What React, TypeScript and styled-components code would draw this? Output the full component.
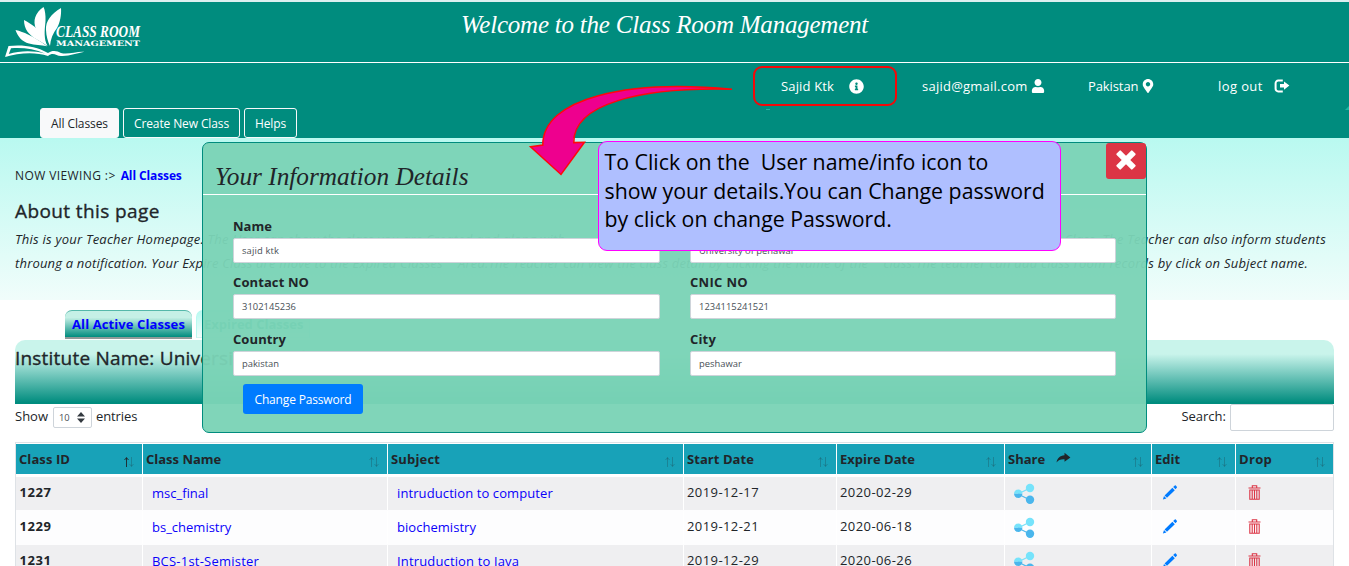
import React from "react";
import styled, { createGlobalStyle } from "styled-components";
import { FaInfoCircle, FaUser, FaMapMarkerAlt } from "react-icons/fa";

const teal = "#008c7e";
const script = "'Liberation Serif', serif";

const GlobalStyle = createGlobalStyle`
  * { box-sizing: border-box; }
  body {
    margin: 0;
    background: #fff;
    color: #212529;
    font-family: "Open Sans", "Noto Sans", sans-serif;
    font-size: 13px;
    overflow: hidden;
  }
`;

const Page = styled.div`
  position: relative;
  width: 1349px;
  height: 566px;
  overflow: hidden;
`;

const Txt = styled.span<{ $ls?: number }>`
  letter-spacing: ${(p) => p.$ls ?? 0}px;
  white-space: pre;
`;

/* Header */
const Header = styled.header`
  height: 138px;
  background: ${teal};
  color: #fff;
  border-top: 2px solid #dceff0;
`;
const Brand = styled.div`
  display: flex;
  height: 61px;
  border-bottom: 1px solid #fff;
`;
const LogoBox = styled.svg`
  display: block;
  width: 150px;
  height: 60px;
  flex: none;
`;
const Welcome = styled.h1`
  margin: 3px 0 0 311px;
  font: italic 400 25px/40px ${script};
`;
const UserBar = styled.div`
  display: grid;
  grid-template-columns: 141px 166px 130px 131px;
  height: 45px;
  padding: 13px 0 0 781px;
`;
const UserItem = styled.div<{ $gap: number }>`
  display: flex;
  align-items: center;
  gap: ${(p) => p.$gap}px;
  height: 20px;
  line-height: 20px;
`;
const NavTabs = styled.nav`
  display: flex;
  gap: 4px;
  padding-left: 40px;
`;
const NavTab = styled.button<{ $active?: boolean; $w: number }>`
  width: ${(p) => p.$w}px;
  height: 30px;
  padding: 1px 0 0;
  border: 1px solid #f8f9fa;
  border-radius: 3px;
  background: ${(p) => (p.$active ? "#f8f9fa" : "transparent")};
  color: ${(p) => (p.$active ? "#212529" : "#fff")};
  font: 12px/27px "Open Sans", sans-serif;
`;

/* Intro */
const Intro = styled.section`
  height: 162px;
  padding: 29px 0 0 15px;
  background: linear-gradient(#b9f9f0, #f1fdfb);
`;
const Viewing = styled.div`
  display: flex;
  gap: 5px;
  font-size: 12px;
  line-height: 18px;
`;
const BlueStrong = styled.strong`
  color: #0000ff;
`;
const Heading = styled.h2<{ $top: number; $bottom: number }>`
  margin: 0;
  padding: ${(p) => p.$top}px 0 ${(p) => p.$bottom}px;
  font-size: 19px;
  font-weight: 500;
  line-height: 24px;
  -webkit-text-stroke: 0.35px #212529;
`;
const IntroLine = styled.p<{ $w: number }>`
  display: flex;
  justify-content: space-between;
  width: ${(p) => p.$w}px;
  margin: 0;
  font-style: italic;
  line-height: 24px;
`;

/* Class lists */
const ListTabs = styled.div`
  display: flex;
  gap: 4px;
  height: 40px;
  padding: 10px 0 0 65px;
`;
const ListTab = styled.div<{ $active?: boolean; $w: number }>`
  width: ${(p) => p.$w}px;
  height: ${(p) => (p.$active ? 29 : 28)}px;
  padding-left: 7px;
  border-radius: 7px 7px 0 0;
  border: 1px solid ${(p) => (p.$active ? "#55b8aa" : "#b9f9f0")};
  border-width: ${(p) => (p.$active ? "1px 0 2px" : "1px")};
  border-bottom-color: ${(p) => (p.$active ? "#8f9a98" : "#d5f5f0")};
  background: ${(p) =>
    p.$active
      ? `linear-gradient(#c5f0e6 25%, ${teal})`
      : "linear-gradient(#b9f9f0, #f1fdfb)"};
  font-weight: 700;
  line-height: 26px;
  color: ${(p) => (p.$active ? "#0000ff" : "#008c7e")};
`;
const Institute = styled.div`
  height: 64px;
  margin: 0 15px;
  border-radius: 10px 10px 0 0;
  background: linear-gradient(#c9f4eb 22%, ${teal} 98%);
`;
const Controls = styled.div`
  display: flex;
  height: 38px;
  padding: 0 15px;
  line-height: 24px;
`;
const Select = styled.div`
  display: flex;
  align-items: center;
  gap: 7px;
  width: 39px;
  height: 21px;
  margin: 3px 4px 0 5px;
  padding-left: 5px;
  border: 1px solid #ced4da;
  border-radius: 2px;
  color: #495057;
  font-size: 9.4px;
`;
const Spacer = styled.div`
  flex: 1;
`;
const SearchInput = styled.input`
  width: 104px;
  height: 27px;
  margin-left: 4px;
  border: 1px solid #ced4da;
  border-radius: 2px;
`;

/* Table */
const Table = styled.div`
  margin: 0 15px;
  border: 1px solid #dee2e6;
  border-bottom: 0;
  padding-top: 1px;
`;
const Row = styled.div<{ $head?: boolean; $odd?: boolean }>`
  display: grid;
  grid-template-columns: 127px 245px 296px 153px 168px 147px 84px 97px;
  height: ${(p) => (p.$head ? 30 : 34)}px;
  margin-bottom: ${(p) => (p.$head ? 3 : 0)}px;
  line-height: 30px;
  background: ${(p) => (p.$head ? "#18a2b8" : p.$odd ? "#efeff1" : "#fdfdfe")};
  border-bottom: ${(p) => (p.$head ? 0 : 1)}px solid #fdfdfe;
  font-weight: ${(p) => (p.$head ? 700 : 400)};
`;
const Cell = styled.div<{ $pad?: number; $bold?: boolean }>`
  display: flex;
  align-items: flex-start;
  padding-left: ${(p) => p.$pad ?? 3}px;
  border-right: 1px solid #fff;
  font-weight: ${(p) => (p.$bold ? 700 : "inherit")};
  &:last-child { border-right: 0; }
`;
const ClassLink = styled.a`
  padding-top: 1px;
  color: #0a00fa;
`;
const SortMark = styled.svg`
  display: block;
  width: 12px;
  height: 12px;
  margin: 12px 7px 0 auto;
`;
const HeadIcon = styled.svg`
  display: block;
  margin: 8px 0 0 11px;
`;
const RowIcon = styled.svg`
  display: block;
  margin-top: 6px;
`;

/* Details dialog */
const Dialog = styled.section`
  position: absolute;
  left: 202px;
  top: 142px;
  width: 945px;
  height: 291px;
  border: 1px solid ${teal};
  border-radius: 7px;
  background: rgba(123, 211, 182, 0.96);
`;
const DialogHead = styled.div`
  display: flex;
  justify-content: space-between;
  height: 52px;
  border-bottom: 1px solid #fff;
`;
const DialogTitle = styled.h3`
  margin: 13px 0 0 12px;
  font: italic 400 25.3px/40px ${script};
`;
const CloseButton = styled.button`
  display: flex;
  align-items: center;
  justify-content: center;
  width: 40px;
  height: 36px;
  padding: 0 0 2px;
  border: 0;
  border-radius: 3px;
  background: #dc3545;
`;
const Fields = styled.div`
  display: grid;
  grid-template-columns: 427px 426px;
  grid-auto-rows: 56.4px;
  column-gap: 30px;
  padding: 22px 0 0 30px;
`;
const Label = styled.label`
  display: block;
  height: 21px;
  font-weight: 700;
  line-height: 18.4px;
`;
const FieldBox = styled.div`
  height: 25px;
  padding-left: 8px;
  border: 1px solid #ced4da;
  border-radius: 2px;
  background: #fff;
  color: #495057;
  font-size: 9.4px;
  line-height: 24px;
`;
const ChangeButton = styled.button`
  display: block;
  width: 120px;
  height: 30px;
  margin: -2px 0 0 40px;
  padding: 1px 0 0;
  border: 0;
  border-radius: 3px;
  background: #007bff;
  color: #fff;
  font: 12px/29px "Open Sans", sans-serif;
`;

/* Tutorial annotations */
const Highlight = styled.div`
  position: absolute;
  left: 753px;
  top: 66px;
  width: 144px;
  height: 40px;
  border: 2px solid #f50808;
  border-radius: 9px;
`;
const ArrowLayer = styled.svg`
  position: absolute;
  left: 0;
  top: 0;
  pointer-events: none;
`;
const Callout = styled.div`
  position: absolute;
  left: 598px;
  top: 141px;
  width: 463px;
  height: 110px;
  padding: 6px 0 0 5.5px;
  border: 1px solid #ff00ff;
  border-radius: 9px;
  background: #afbfff;
  color: #000;
  font-size: 21.3px;
  line-height: 28.5px;
  white-space: pre;
`;

const Logo = () => (
  <LogoBox viewBox="0 2 150 60" fill="#fff">
    <path d="M43.5 7 C35 13 32.5 21 36 29 C38 35 42 40 46.5 45 C43.5 35 45 28 45.5 21 C45.8 15 45 10 43.5 7Z" />
    <path d="M61 8 C51 14 45.5 21 46 30 C46.2 36 48 42 50 46 C50.5 39 53 33 57 28 C60 23 61.5 15 61 8Z" />
    <path d="M24 20 C24 29 29 35 36 39 C40 41.5 44 43.5 47.5 46 C44 38 40 32 35 27 C31 24 28 22 24 20Z" />
    <path d="M15.5 30 C18 37 22 41.5 29 43.5 C35 45 41 45 47 46.2 C40 41 34 37.5 28 34.5 C24 32.5 20 31 15.5 30Z" />
    <path
      d="M5 57 L8.5 46 C22 44.5 36 46 48 53 C52 50 57 50.5 61 53 C68 55 77 51 84.5 51.8 C77 53 69 56.5 61 56 C56 55.5 53 51.5 48 56 C35 51.5 18 53 5 57Z M8.8 54 C20 50.5 34 50.5 45 53.5 C34 48.5 22 47.5 11 48.3Z"
      fillRule="evenodd"
    />
    <text x="56" y="37" fontFamily="Liberation Serif, serif" fontStyle="italic" fontWeight="700" fontSize="17" textLength="84" lengthAdjust="spacingAndGlyphs">
      CLASS ROOM
    </text>
    <text x="56" y="46" fontFamily="DejaVu Serif, serif" fontWeight="700" fontSize="7.4" textLength="84" lengthAdjust="spacingAndGlyphs">
      MANAGEMENT
    </text>
  </LogoBox>
);

const LogoutIcon = () => (
  <svg width="16" height="14" viewBox="0 0 16 14">
    <path d="M8.8 1.6 H4.2 A2.6 2.6 0 0 0 1.6 4.2 V9.8 A2.6 2.6 0 0 0 4.2 12.4 H8.8" fill="none" stroke="#fff" strokeWidth="2" />
    <path d="M10 2.4 L15.4 6.6 L10 10.8 V8.4 H6 V4.9 H10Z" fill="#fff" />
  </svg>
);

const CloseIcon = () => (
  <svg width="20" height="20" viewBox="0 0 20 20" fill="#fff">
    <rect x="-1.2" y="7" width="22.4" height="6" rx="1" transform="rotate(45 10 10)" />
    <rect x="-1.2" y="7" width="22.4" height="6" rx="1" transform="rotate(-45 10 10)" />
  </svg>
);

const SortIcon = ({ active }: { active?: boolean }) => (
  <SortMark viewBox="0 0 12 12" fill="none" stroke="#212529" strokeWidth="1">
    <path d="M3.5 11 V1.5 M1.5 4 L3.5 1.7 L5.5 4" opacity={active ? 0.9 : 0.24} />
    <path d="M8.5 1 V10.5 M6.5 8 L8.5 10.3 L10.5 8" opacity="0.24" />
  </SortMark>
);

const ForwardIcon = () => (
  <HeadIcon width="15" height="12" viewBox="0 0 15 12" fill="#212529">
    <path d="M8.5 0.8 L14.4 5.4 L8.5 9.8 V7.3 C4.8 7.1 2.4 7.9 0.6 10.6 C1 6.3 4 3.6 8.5 3.3Z" />
  </HeadIcon>
);

const ShareIcon = () => (
  <RowIcon width="22" height="22" viewBox="0 0 22 22">
    <path d="M5 11 L17 5" stroke="#76e0f8" strokeWidth="1.2" />
    <path d="M5 11 L17 17" stroke="#4db8ec" strokeWidth="1.2" />
    <circle cx="17" cy="5" r="4.2" fill="#76e3fb" />
    <circle cx="17" cy="16.7" r="4.2" fill="#4ab6ec" />
    <path d="M1 10.7 A4.2 4.2 0 0 1 9.4 10.7Z" fill="#76e3fb" />
    <path d="M1 10.7 A4.2 4.2 0 0 0 9.4 10.7Z" fill="#4ab6ec" />
  </RowIcon>
);

const PencilIcon = () => (
  <RowIcon width="16" height="18" viewBox="0 0 16 18" fill="#007bff">
    <path d="M10.4 4.8 L12.8 7.2 L5 14.8 L2.6 12.4Z" />
    <path d="M11.2 4 L12.8 2.5 Q13.3 2.1 13.8 2.6 L14.8 3.7 Q15.2 4.2 14.8 4.7 L13.5 6.3Z" />
    <path d="M2 13.1 L4.4 15.4 L0.9 16.6Z" />
  </RowIcon>
);

const TrashIcon = () => (
  <RowIcon width="14" height="18" viewBox="0 0 14 18" fill="none" stroke="#dc3545" strokeWidth="1.1">
    <path d="M0.5 5 H12.5 M4.3 4.8 V2.7 H8.7 V4.8 M1.8 7 V16.3 H11.2 V7Z M4.2 7 V16 M6.5 7 V16 M8.8 7 V16" />
  </RowIcon>
);

const columns: { name: string; ls: number }[] = [
  { name: "Class ID", ls: 0.08 },
  { name: "Class Name", ls: 0 },
  { name: "Subject", ls: 0.16 },
  { name: "Start Date", ls: 0.06 },
  { name: "Expire Date", ls: 0.02 },
  { name: "Share", ls: 0 },
  { name: "Edit", ls: 0 },
  { name: "Drop", ls: 0.3 },
];

const classes = [
  { id: "1227", name: "msc_final", nls: 0, subject: "intruduction to computer", sls: 0.1, start: "2019-12-17", end: "2020-02-29" },
  { id: "1229", name: "bs_chemistry", nls: 0, subject: "biochemistry", sls: 0.04, start: "2019-12-21", end: "2020-06-18" },
  { id: "1231", name: "BCS-1st-Semister", nls: 0.22, subject: "Intruduction to Java", sls: 0.15, start: "2019-12-29", end: "2020-06-26" },
];

const fields = [
  { label: "Name", ls: 0.03, value: "sajid ktk", vls: 0.14 },
  { label: "Institute", ls: 0, value: "University of pehawar", vls: 0 },
  { label: "Contact NO", ls: 0.1, value: "3102145236", vls: 0.04 },
  { label: "CNIC NO", ls: 0.32, value: "1234115241521", vls: 0.02 },
  { label: "Country", ls: 0.09, value: "pakistan", vls: 0 },
  { label: "City", ls: 0.18, value: "peshawar", vls: 0.03 },
];

export default function App() {
  return (
    <Page>
      <GlobalStyle />
      <Header>
        <Brand>
          <Logo />
          <Welcome><Txt $ls={-0.22}>Welcome to the Class Room Management</Txt></Welcome>
        </Brand>
        <UserBar>
          <UserItem $gap={15}><Txt $ls={0.15}>Sajid Ktk</Txt><FaInfoCircle size={15} /></UserItem>
          <UserItem $gap={3}><Txt $ls={0.24}>sajid@gmail.com</Txt><FaUser size={14} /></UserItem>
          <UserItem $gap={3}><Txt $ls={-0.1}>Pakistan</Txt><FaMapMarkerAlt size={14} /></UserItem>
          <UserItem $gap={11}><Txt $ls={0.4}>log out</Txt><LogoutIcon /></UserItem>
        </UserBar>
        <NavTabs>
          <NavTab $active $w={79}><Txt $ls={-0.08}>All Classes</Txt></NavTab>
          <NavTab $w={117}><Txt $ls={-0.12}>Create New Class</Txt></NavTab>
          <NavTab $w={53}><Txt $ls={-0.14}>Helps</Txt></NavTab>
        </NavTabs>
      </Header>

      <Intro>
        <Viewing>
          <Txt $ls={0.4}>NOW VIEWING :&gt;</Txt>
          <BlueStrong><Txt $ls={-0.11}>All Classes</Txt></BlueStrong>
        </Viewing>
        <Heading $top={14} $bottom={4}><Txt $ls={0.4}>About this page</Txt></Heading>
        <IntroLine $w={1311}>
          <Txt $ls={0.24}>This is your Teacher Homepage. The User can show the class you are Created and along with</Txt>
          <Txt $ls={0.24}>the details of every student that have joined the Active</Txt>
          <Txt $ls={0.26}>Class. The Teacher can also inform students</Txt>
        </IntroLine>
        <IntroLine $w={1293}>
          <Txt $ls={0.18}>throung a notification. Your Expire Class are move to the Expired Classes</Txt>
          <Txt $ls={0.18}>Area.The Teacher can view the class detail by clicking the Name of the</Txt>
          <Txt $ls={0.25}>class.The teacher can add class room records by click on Subject name.</Txt>
        </IntroLine>
      </Intro>

      <ListTabs>
        <ListTab $active $w={127}><Txt $ls={0.1}>All Active Classes</Txt></ListTab>
        <ListTab $w={114}><Txt>Expired Classes</Txt></ListTab>
      </ListTabs>
      <Institute>
        <Heading $top={6} $bottom={0}><Txt $ls={0.2}>Institute Name: University of pehawar</Txt></Heading>
      </Institute>
      <Controls>
        <Txt>Show</Txt>
        <Select>
          <Txt>10</Txt>
          <svg width="8" height="11" viewBox="0 0 8 11" fill="#343a40">
            <path d="M4 0 L8 4.5 H0Z M4 11 L8 6.5 H0Z" />
          </svg>
        </Select>
        <Txt $ls={-0.1}>entries</Txt>
        <Spacer />
        <Txt $ls={0}>Search:</Txt>
        <SearchInput />
      </Controls>

      <Table>
        <Row $head>
          {columns.map((c, i) => (
            <Cell key={c.name}>
              <Txt $ls={c.ls}>{c.name}</Txt>
              {c.name === "Share" && <ForwardIcon />}
              <SortIcon active={i === 0} />
            </Cell>
          ))}
        </Row>
        {classes.map((c, i) => (
          <Row key={c.id} $odd={i % 2 === 0}>
            <Cell $bold $pad={3.5}><Txt $ls={0.57}>{c.id}</Txt></Cell>
            <Cell $pad={9}><ClassLink><Txt $ls={c.nls}>{c.name}</Txt></ClassLink></Cell>
            <Cell $pad={9}><ClassLink><Txt $ls={c.sls}>{c.subject}</Txt></ClassLink></Cell>
            <Cell><Txt $ls={0.42}>{c.start}</Txt></Cell>
            <Cell><Txt $ls={0.42}>{c.end}</Txt></Cell>
            <Cell $pad={8}><ShareIcon /></Cell>
            <Cell $pad={10}><PencilIcon /></Cell>
            <Cell $pad={12}><TrashIcon /></Cell>
          </Row>
        ))}
      </Table>

      <Dialog>
        <DialogHead>
          <DialogTitle><Txt>Your Information Details</Txt></DialogTitle>
          <CloseButton aria-label="Close"><CloseIcon /></CloseButton>
        </DialogHead>
        <Fields>
          {fields.map((f) => (
            <div key={f.label}>
              <Label><Txt $ls={f.ls}>{f.label}</Txt></Label>
              <FieldBox><Txt $ls={f.vls}>{f.value}</Txt></FieldBox>
            </div>
          ))}
        </Fields>
        <ChangeButton><Txt $ls={-0.16}>Change Password</Txt></ChangeButton>
      </Dialog>

      <Highlight />
      <ArrowLayer width="1349" height="180" viewBox="0 0 1349 180">
        <path d="M766 109.5 H770" stroke="#1fb5a2" />
        <path d="M1349 106 V110 H1345Z" fill="#1fb5a2" />
        <path
          d="M732 89.3 C628 79 542.5 98 542.8 145 L530.5 146.8 L561 174.5 L584.5 142.2 L573.8 142.6 C573 104 640 87 732 89.3Z"
          fill="#ee008e"
          stroke="#ff0808"
          strokeWidth="1.5"
        />
      </ArrowLayer>
      <Callout>{"To Click on the  User name/info icon to\nshow your details.You can Change password\nby click on change Password."}</Callout>
    </Page>
  );
}
